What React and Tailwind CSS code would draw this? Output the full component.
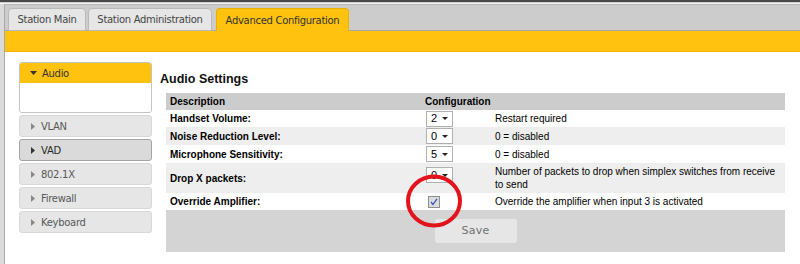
import React from "react";

const Tri = ({ down, color }) =>
  down ? (
    <svg width="7" height="4" viewBox="0 0 7 4" className="shrink-0">
      <path d="M0 0 H7 L3.5 4 Z" fill={color} />
    </svg>
  ) : (
    <svg width="4" height="7" viewBox="0 0 4 7" className="shrink-0">
      <path d="M0 0 V7 L4 3.5 Z" fill={color} />
    </svg>
  );

const SideItem = ({ label, active }) => (
  <div
    className={
      "mt-[2px] h-[22px] rounded-[3px] border flex items-center pl-[11px] gap-[6px] " +
      (active
        ? "bg-[#dadada] border-[#a5a5a5] text-[#2a2a2a]"
        : "bg-[#e6e6e6] border-[#d8d8d8] text-[#585858]")
    }
  >
    <Tri color={active ? "#333" : "#888"} />
    <span className="text-[10px] tracking-[-0.3px]">{label}</span>
  </div>
);

const Select = ({ v }) => (
  <div className="w-[27px] h-[16px] bg-white border border-[#b0b0b0] flex items-center pl-[4px] text-[11px] text-black font-['Liberation_Sans',sans-serif]">
    <span className="w-[11px]">{v}</span>
    <svg width="6" height="3" viewBox="0 0 6 3">
      <path d="M0 0 H6 L3 3 Z" fill="#222" />
    </svg>
  </div>
);

const Row = ({ h, bg, desc, conf, comment }) => (
  <div className={"grid grid-cols-[254px_70px_1fr] items-center " + h + " " + bg}>
    <div className="pl-[4px] font-bold">{desc}</div>
    <div className="pl-[6px] flex items-center">{conf}</div>
    <div className="pl-[5px] leading-[13px]">{comment}</div>
  </div>
);

export default function App() {
  return (
    <div className="w-[800px] h-[264px] overflow-hidden bg-white relative flex flex-col font-['DejaVu_Sans',sans-serif]">
      <div className="h-[2px] bg-[#484848]" />
      <div className="h-[1px] bg-[#cfcfcf]" />
      <div className="h-[1px] bg-[#f4f4f4]" />
      <div className="flex flex-1 min-h-0">
        <div className="w-[5px] bg-[#dadada] border-r border-[#a8a8a8]" />
        <div className="flex-1 flex flex-col min-w-0">
          {/* tab bar */}
          <div className="h-[27px] bg-[#cccccc] border-t border-b border-t-[#b8b8b8] border-b-[#a9a9a9] flex items-end pl-[3px]">
            <div className="-mb-[1px] h-[23px] w-[78px] rounded-t-[4px] border border-[#b9b9b9] bg-[#e6e6e6] flex items-center justify-center text-[10px] tracking-[-0.3px] text-[#444]">
              Station Main
            </div>
            <div className="-mb-[1px] ml-[2px] h-[23px] w-[124px] rounded-t-[4px] border border-[#b9b9b9] bg-[#e6e6e6] flex items-center justify-center text-[10px] tracking-[-0.3px] text-[#444]">
              Station Administration
            </div>
            <div className="-mb-[1px] ml-[4px] h-[23px] w-[133px] rounded-t-[4px] border border-b-0 border-[#e8b000] bg-[#ffc20e] flex items-center justify-center text-[10px] tracking-[-0.3px] text-[#333]">
              Advanced Configuration
            </div>
          </div>
          {/* yellow band */}
          <div className="h-[21px] bg-[#ffc20e] border-b border-[#f2b600]" />
          {/* content */}
          <div className="flex pl-[14px] pt-[10px]">
            {/* sidebar */}
            <div className="w-[133px] flex flex-col">
              <div className="rounded-[3px] border border-[#c4c4c4] overflow-hidden">
                <div className="h-[20px] bg-[#ffc20e] flex items-center pl-[10px] gap-[5px] text-[#333]">
                  <Tri down color="#333" />
                  <span className="text-[10px] tracking-[-0.3px]">Audio</span>
                </div>
                <div className="h-[29px] bg-white" />
              </div>
              <SideItem label="VLAN" />
              <SideItem label="VAD" active />
              <SideItem label="802.1X" />
              <SideItem label="Firewall" />
              <SideItem label="Keyboard" />
            </div>
            {/* main */}
            <div className="ml-[8px] flex flex-col font-['Liberation_Sans',sans-serif] text-[10px] text-black">
              <div className="mt-[9px] h-[16px] leading-[16px] text-[12.5px] font-bold text-[#111]">
                Audio Settings
              </div>
              <div className="mt-[6px] ml-[6px] w-[619px] flex flex-col">
                <Row h="h-[17px]" bg="bg-[#cccccc]" desc="Description" conf={<span className="font-bold -ml-[1px]">Configuration</span>} comment="" />
                <Row h="h-[17px]" bg="bg-white" desc="Handset Volume:" conf={<Select v="2" />} comment="Restart required" />
                <Row h="h-[18px]" bg="bg-[#eeeeee]" desc="Noise Reduction Level:" conf={<Select v="0" />} comment="0 = disabled" />
                <Row h="h-[18px]" bg="bg-white" desc="Microphone Sensitivity:" conf={<Select v="5" />} comment="0 = disabled" />
                <Row
                  h="h-[30px]"
                  bg="bg-[#eeeeee]"
                  desc="Drop X packets:"
                  conf={<div className="-mt-[6px]"><Select v="0" /></div>}
                  comment={
                    <span className="whitespace-nowrap">
                      Number of packets to drop when simplex switches from receive
                      <br />
                      to send
                    </span>
                  }
                />
                <Row
                  h="h-[17px]"
                  bg="bg-white"
                  desc="Override Amplifier:"
                  conf={
                    <svg width="12" height="12" viewBox="0 0 12 12" className="ml-[2px]">
                      <rect x="0.5" y="0.5" width="11" height="11" fill="#dcdcdc" stroke="#8e8e8e" />
                      <path d="M3 6 L5 8.5 L9 2.8" fill="none" stroke="#3355bb" strokeWidth="1.3" />
                    </svg>
                  }
                  comment="Override the amplifier when input 3 is activated"
                />
                <div className="h-[42px] bg-[#d4d4d4] flex items-center justify-center">
                  <div className="w-[82px] h-[24px] rounded-[2px] bg-[#e6e6e6] flex items-center justify-center font-['DejaVu_Sans',sans-serif] text-[11px] tracking-[0.2px] text-[#707070]">
                    Save
                  </div>
                </div>
              </div>
            </div>
          </div>
        </div>
      </div>
      {/* red annotation circle */}
      <svg className="absolute left-[405px] top-[173px]" width="58" height="56" viewBox="0 0 58 56">
        <ellipse cx="29" cy="28" rx="26" ry="24.5" fill="none" stroke="#e3131b" strokeWidth="4" />
      </svg>
    </div>
  );
}
